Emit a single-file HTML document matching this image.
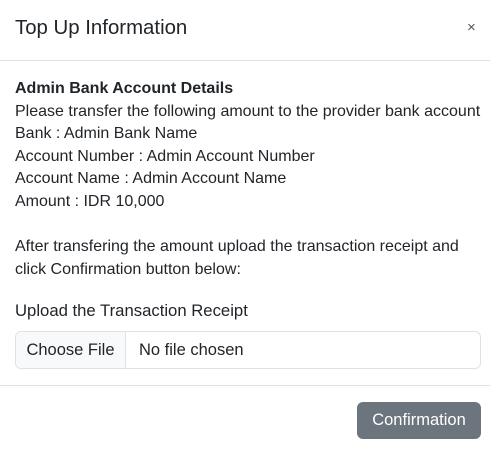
<!DOCTYPE html>
<html><head><style>
body{margin:0;width:490px;height:456px;background:#fff;font-family:"Liberation Sans",sans-serif;color:#212529;position:relative;overflow:hidden}
.a{position:absolute;white-space:nowrap}
.t{font-size:16px;line-height:22.6px}
</style></head><body>
<div class="a" style="left:15px;top:15px;font-size:20.4px;line-height:26px">Top Up Information</div>
<div class="a" style="left:467px;top:19px;font-size:15px;color:#555">×</div>
<div class="a" style="left:0;top:60px;width:490px;height:1px;background:#dee2e6"></div>
<div class="a t" style="left:15px;top:78px">
<b>Admin Bank Account Details</b><br>
Please transfer the following amount to the provider bank account<br>
Bank : Admin Bank Name<br>
Account Number : Admin Account Number<br>
Account Name : Admin Account Name<br>
Amount : IDR 10,000<br><br>
After transfering the amount upload the transaction receipt and<br>
click Confirmation button below:</div>
<div class="a" style="left:15px;top:300px;font-size:16.7px;line-height:22px">Upload the Transaction Receipt</div>
<div class="a" style="left:15px;top:331px;width:464px;height:36px;border:1px solid #dee2e6;border-radius:6px;overflow:hidden;font-size:16.5px">
<div class="a" style="left:0;top:0;width:109px;height:36px;background:#f8f9fa;border-right:1px solid #dee2e6;line-height:36px;text-align:center">Choose File</div>
<div class="a" style="left:123px;top:0;line-height:36px">No file chosen</div>
</div>
<div class="a" style="left:0;top:385px;width:490px;height:1px;background:#dee2e6"></div>
<div class="a" style="left:357px;top:402px;width:124px;height:37px;background:#6c757d;border-radius:6px;color:#fff;font-size:16.5px;line-height:37px;text-align:center">Confirmation</div>
</body></html>
